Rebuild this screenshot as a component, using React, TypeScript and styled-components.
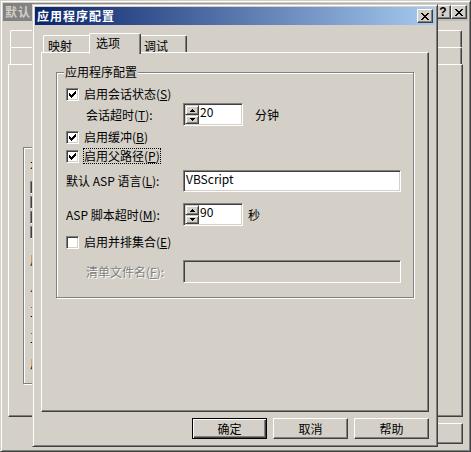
import styled, { createGlobalStyle, css } from "styled-components";

const GlobalStyle = createGlobalStyle`
  html, body {
    margin: 0;
    padding: 0;
    background: #d4d0c8;
  }
  body {
    font-family: "Noto Sans CJK SC", "Liberation Sans", sans-serif;
    font-size: 12px;
    line-height: 14px;
    color: #000;
  }
  *, *::before, *::after {
    box-sizing: border-box;
  }
`;

// classic win2k bevels
const raised = css`
  border: 1px solid;
  border-color: #fff #404040 #404040 #fff;
  box-shadow: inset -1px -1px #808080;
`;

const windowFrame = css`
  border: 1px solid;
  border-color: #d4d0c8 #404040 #404040 #d4d0c8;
  box-shadow: inset 1px 1px #fff, inset -1px -1px #808080;
  padding: 2px;
  background: #d4d0c8;
`;

const sunken = css`
  border: 1px solid;
  border-color: #808080 #fff #fff #808080;
  box-shadow: inset 1px 1px #404040, inset -1px -1px #d4d0c8;
`;

const etched = css`
  border: 1px solid #808080;
  box-shadow: inset 1px 1px #fff, 1px 1px #fff;
`;

const Desktop = styled.div`
  position: relative;
  width: 471px;
  height: 452px;
  overflow: hidden;
`;

/* ---------- window chrome ---------- */

const BackWindow = styled.div`
  ${windowFrame}
  width: 471px;
  height: 452px;
  display: flex;
  flex-direction: column;
`;

const Dialog = styled.div`
  ${windowFrame}
  position: absolute;
  left: 32px;
  top: 4px;
  width: 406px;
  height: 443px;
  display: flex;
  flex-direction: column;
`;

const Caption = styled.div<{ $active?: boolean; $padRight?: number }>`
  flex: none;
  height: 18px;
  display: flex;
  align-items: center;
  padding: 0 ${(p) => p.$padRight ?? 2}px 0 2px;
  background: ${(p) =>
    p.$active
      ? "linear-gradient(to right, #0a246a, #a6caf0)"
      : "linear-gradient(to right, #808080, #c0c0c0)"};
  color: ${(p) => (p.$active ? "#fff" : "#d4d0c8")};
`;

const CaptionText = styled.span`
  flex: 1;
  font-weight: bold;
  letter-spacing: 1px;
  white-space: nowrap;
`;

const CaptionButton = styled.div`
  ${raised}
  flex: none;
  width: 16px;
  height: 14px;
  background: #d4d0c8;
  color: #000;
  display: flex;
  align-items: center;
  justify-content: center;
  font-family: "Liberation Sans", sans-serif;
  font-weight: bold;
  font-size: 12px;
  line-height: 12px;
`;

/* ---------- back window (property sheet) ---------- */

const BackBody = styled.div`
  flex: 1;
  display: flex;
  flex-direction: column;
  padding: 9px 5px 0;
`;

const BackTabRows = styled.div`
  display: flex;
  flex-direction: column;
  margin: 0 1px 0 2px;
`;

const BackTabRow = styled.div`
  display: flex;
  height: 17px;
`;

const BackTab = styled.div`
  flex: 1;
  border-top: 1px solid #fff;
  border-left: 1px solid #fff;
  border-right: 1px solid #404040;
  border-radius: 2px 2px 0 0;
  box-shadow: inset -1px 0 #808080;
`;

const BackPanel = styled.div`
  ${raised}
  height: 353px;
  padding: 82px 0 0 14px;
`;

const BackGroup = styled.div`
  ${etched}
  width: 380px;
  height: 237px;
  display: flex;
  flex-direction: column;
  padding: 10px 0 0 6px;
  gap: 6px;
`;

const BackLine = styled.div<{ $mt?: number }>`
  display: flex;
  align-items: center;
  gap: 5px;
  height: 14px;
  margin-top: ${(p) => p.$mt ?? 0}px;
  white-space: nowrap;
`;

/* ---------- dialog body ---------- */

const DialogBody = styled.div`
  flex: 1;
  display: flex;
  flex-direction: column;
  padding: 8px 6px 5px;
`;

const TabStrip = styled.div`
  display: flex;
  align-items: flex-end;
  height: 19px;
  padding-left: 2px;
  position: relative;
  z-index: 1;
`;

const Tab = styled.div<{ $selected?: boolean }>`
  position: relative;
  z-index: ${(p) => (p.$selected ? 2 : 1)};
  width: ${(p) => (p.$selected ? 52 : 48)}px;
  height: ${(p) => (p.$selected ? 21 : 17)}px;
  margin: 0 ${(p) => (p.$selected ? -2 : 0)}px ${(p) => (p.$selected ? -2 : 0)}px;
  padding: ${(p) => (p.$selected ? "2px 0 0 6px" : "3px 0 0 4px")};
  background: #d4d0c8;
  border-top: 1px solid #fff;
  border-left: 1px solid #fff;
  border-right: 1px solid #404040;
  border-radius: 2px 2px 0 0;
  box-shadow: inset -1px 0 #808080;
  white-space: nowrap;
`;

const TabPanel = styled.div`
  ${raised}
  height: 360px;
  padding: 19px 0 0 14px;
`;

const GroupBox = styled.div`
  ${etched}
  width: 358px;
  height: 226px;
  display: flex;
  flex-direction: column;
`;

const GroupTitle = styled.div`
  align-self: flex-start;
  margin: -8px 0 0 7px;
  padding: 0 1px;
  background: #d4d0c8;
`;

const Row = styled.div<{ $mt: number; $h: number; $indent?: number }>`
  display: flex;
  align-items: center;
  height: ${(p) => p.$h}px;
  margin-top: ${(p) => p.$mt}px;
  padding-left: ${(p) => 9 + (p.$indent ?? 0)}px;
  white-space: nowrap;
`;

const CheckLabel = styled.label`
  display: flex;
  align-items: center;
`;

const CheckBox = styled.span`
  ${sunken}
  flex: none;
  width: 13px;
  height: 13px;
  background: #fff;
  display: flex;
  align-items: center;
  justify-content: center;
`;

const CheckText = styled.span<{ $focused?: boolean }>`
  margin-left: 4px;
  border: 1px ${(p) => (p.$focused ? "dotted #000" : "solid transparent")};
`;

const FieldLabel = styled.span<{ $w: number; $disabled?: boolean }>`
  flex: none;
  width: ${(p) => p.$w}px;
  color: ${(p) => (p.$disabled ? "#808080" : "#000")};
  text-shadow: ${(p) => (p.$disabled ? "1px 1px #fff" : "none")};
`;

const EditField = styled.div<{ $w: number; $h?: number; $disabled?: boolean }>`
  ${sunken}
  flex: none;
  width: ${(p) => p.$w}px;
  height: ${(p) => p.$h ?? 22}px;
  padding: 1px 2px;
  background: ${(p) => (p.$disabled ? "#d4d0c8" : "#fff")};
`;

const SpinField = styled.div`
  ${sunken}
  flex: none;
  width: 60px;
  height: 23px;
  padding: 1px;
  background: #fff;
  display: flex;
`;

const SpinButtons = styled.div`
  flex: none;
  width: 14px;
  display: flex;
  flex-direction: column;
`;

const SpinHalf = styled.div<{ $h: number }>`
  height: ${(p) => p.$h}px;
  background: #d4d0c8;
  border: 1px solid;
  border-color: #d4d0c8 #404040 #404040 #d4d0c8;
  box-shadow: inset 1px 1px #fff, inset -1px -1px #808080;
  display: flex;
  align-items: center;
  justify-content: center;
`;

const FieldText = styled.span`
  padding-left: 1px;
`;

const Unit = styled.span<{ $ml: number }>`
  margin-left: ${(p) => p.$ml}px;
`;

const ButtonRow = styled.div<{ $mt?: number }>`
  display: flex;
  justify-content: flex-end;
  gap: 6px;
  margin-top: ${(p) => p.$mt ?? 6}px;
`;

const PushButton = styled.button<{ $default?: boolean }>`
  flex: none;
  width: 75px;
  height: 21px;
  padding: 0;
  font: inherit;
  color: #000;
  background: #d4d0c8;
  ${(p) =>
    p.$default
      ? css`
          border: 1px solid #000;
          box-shadow: inset 1px 1px #fff, inset -1px -1px #404040,
            inset -2px -2px #808080;
        `
      : raised}
`;

/* ---------- pixel glyphs ---------- */

const CHECK =
  "M6 0h1v1h-1z M5 1h2v1h-2z M0 2h1v1h-1z M4 2h3v1h-3z M0 3h2v1h-2z M3 3h3v1h-3z M0 4h5v1h-5z M1 5h3v1h-3z M2 6h1v1h-1z";
const CLOSE =
  "M0 0h2v1h-2z M6 0h2v1h-2z M1 1h2v1h-2z M5 1h2v1h-2z M2 2h4v1h-4z M3 3h2v1h-2z M2 4h4v1h-4z M1 5h2v1h-2z M5 5h2v1h-2z M0 6h2v1h-2z M6 6h2v1h-2z";
const UP = "M2 0h1v1h-1z M1 1h3v1h-3z M0 2h5v1h-5z";
const DOWN = "M0 0h5v1h-5z M1 1h3v1h-3z M2 2h1v1h-1z";

const Pixels = ({ w, h, d }: { w: number; h: number; d: string }) => (
  <svg width={w} height={h} viewBox={`0 0 ${w} ${h}`} shapeRendering="crispEdges">
    <path d={d} fill="#000" />
  </svg>
);

const Check = ({ checked }: { checked?: boolean }) => (
  <CheckBox>{checked && <Pixels w={7} h={7} d={CHECK} />}</CheckBox>
);

const Spin = ({ value }: { value: string }) => (
  <SpinField>
    <SpinButtons>
      <SpinHalf $h={10}>
        <Pixels w={5} h={3} d={UP} />
      </SpinHalf>
      <SpinHalf $h={9}>
        <Pixels w={5} h={3} d={DOWN} />
      </SpinHalf>
    </SpinButtons>
    <FieldText>{value}</FieldText>
  </SpinField>
);

// tab labels of the sheet behind are covered by the dialog
const backTabRows = [5, 5];

const App = () => {
  return (
    <>
      <GlobalStyle />
      <Desktop>
        <BackWindow>
          <Caption $padRight={1}>
            <CaptionText>默认</CaptionText>
            <CaptionButton>?</CaptionButton>
            <CaptionButton>
              <Pixels w={8} h={7} d={CLOSE} />
            </CaptionButton>
          </Caption>
          <BackBody>
            <BackTabRows>
              {backTabRows.map((n, i) => (
                <BackTabRow key={i}>
                  {Array.from({ length: n }, (_, j) => (
                    <BackTab key={j} />
                  ))}
                </BackTabRow>
              ))}
            </BackTabRows>
            <BackPanel>
              <BackGroup>
                <BackLine>本</BackLine>
                <BackLine $mt={2}>
                  <Check checked />
                </BackLine>
                <BackLine $mt={-5}>
                  <Check checked />
                </BackLine>
                <BackLine $mt={-5}>
                  <Check />
                </BackLine>
                <BackLine $mt={-5}>
                  <Check />
                </BackLine>
                <BackLine $mt={8}>用</BackLine>
                <BackLine $mt={6}>几</BackLine>
                <BackLine $mt={6}>三</BackLine>
                <BackLine $mt={6}>三</BackLine>
                <BackLine $mt={6}>川</BackLine>
              </BackGroup>
            </BackPanel>
            <ButtonRow>
              <PushButton />
              <PushButton />
              <PushButton />
              <PushButton />
            </ButtonRow>
          </BackBody>
        </BackWindow>

        <Dialog>
          <Caption $active>
            <CaptionText>应用程序配置</CaptionText>
            <CaptionButton>
              <Pixels w={8} h={7} d={CLOSE} />
            </CaptionButton>
          </Caption>
          <DialogBody>
            <TabStrip>
              <Tab>映射</Tab>
              <Tab $selected>选项</Tab>
              <Tab>调试</Tab>
            </TabStrip>
            <TabPanel>
              <GroupBox>
                <GroupTitle>应用程序配置</GroupTitle>
                <Row $mt={8} $h={14}>
                  <CheckLabel>
                    <Check checked />
                    <CheckText>
                      启用会话状态(<u>S</u>)
                    </CheckText>
                  </CheckLabel>
                </Row>
                <Row $mt={2} $h={23} $indent={20}>
                  <FieldLabel $w={97}>
                    会话超时(<u>T</u>):
                  </FieldLabel>
                  <Spin value="20" />
                  <Unit $ml={12}>分钟</Unit>
                </Row>
                <Row $mt={4} $h={14}>
                  <CheckLabel>
                    <Check checked />
                    <CheckText>
                      启用缓冲(<u>B</u>)
                    </CheckText>
                  </CheckLabel>
                </Row>
                <Row $mt={5} $h={14}>
                  <CheckLabel>
                    <Check checked />
                    <CheckText $focused>
                      启用父路径(<u>P</u>)
                    </CheckText>
                  </CheckLabel>
                </Row>
                <Row $mt={7} $h={22}>
                  <FieldLabel $w={117}>
                    默认 ASP 语言(<u>L</u>):
                  </FieldLabel>
                  <EditField $w={218}>VBScript</EditField>
                </Row>
                <Row $mt={11} $h={23}>
                  <FieldLabel $w={117}>
                    ASP 脚本超时(<u>M</u>):
                  </FieldLabel>
                  <Spin value="90" />
                  <Unit $ml={5}>秒</Unit>
                </Row>
                <Row $mt={9} $h={14}>
                  <CheckLabel>
                    <Check />
                    <CheckText>
                      启用并排集合(<u>E</u>)
                    </CheckText>
                  </CheckLabel>
                </Row>
                <Row $mt={11} $h={23} $indent={20}>
                  <FieldLabel $w={97} $disabled>
                    清单文件名(<u>F</u>):
                  </FieldLabel>
                  <EditField $w={218} $h={23} $disabled />
                </Row>
              </GroupBox>
            </TabPanel>
            <ButtonRow>
              <PushButton $default>确定</PushButton>
              <PushButton>取消</PushButton>
              <PushButton>帮助</PushButton>
            </ButtonRow>
          </DialogBody>
        </Dialog>
      </Desktop>
    </>
  );
};

export default App;
